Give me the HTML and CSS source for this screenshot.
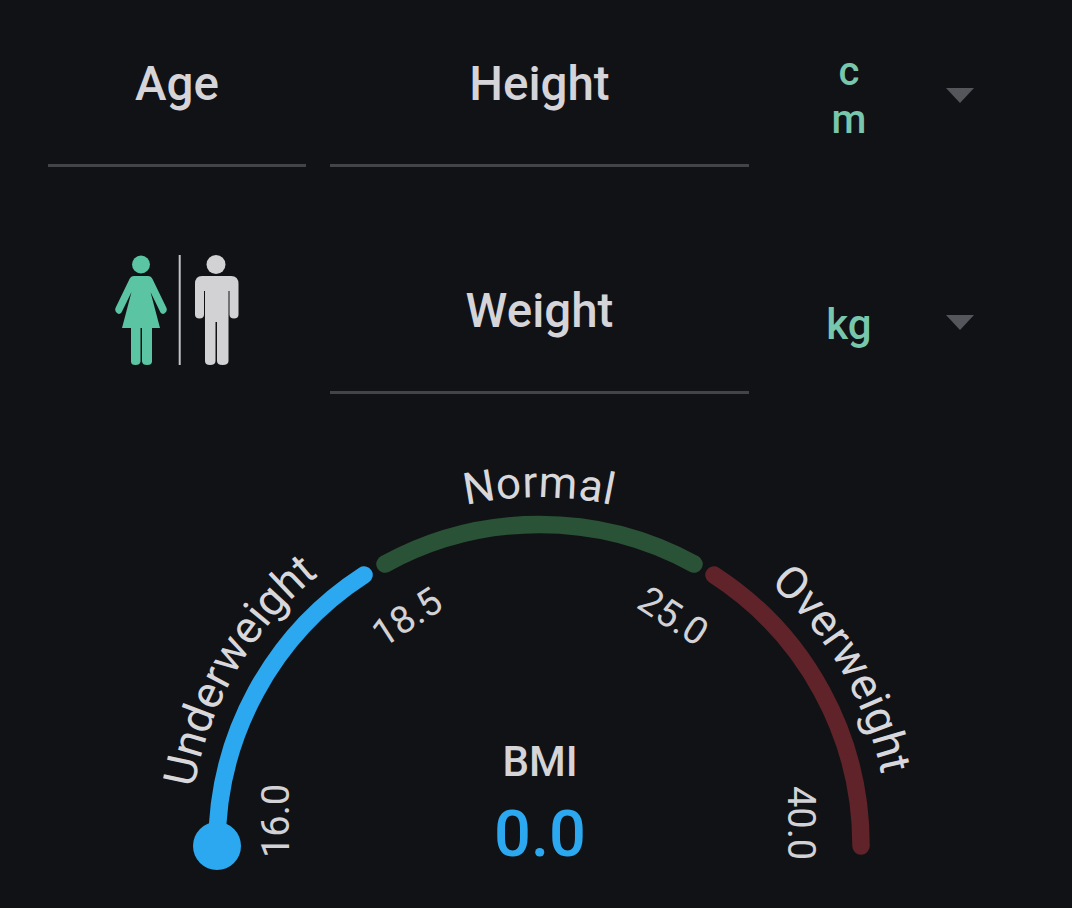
FILE: index.html
```html
<!DOCTYPE html>
<html lang="en">
<head>
<meta charset="utf-8">
<title>BMI calculator</title>
<link rel="stylesheet" href="styles.css">
</head>
<body>
<main class="screen">
  <section class="form">
    <div class="field"><span class="field-label">Age</span></div>
    <div class="field"><span class="field-label">Height</span></div>
    <div class="unit">
      <span class="unit-value unit-narrow">cm</span>
      <span class="caret"></span>
    </div>
    <div class="gender">
      <svg class="gender-icon" viewBox="115 254 125 112" aria-label="Gender">
        <g class="female">
          <circle cx="141" cy="264.5" r="9"/>
          <path d="M134 276H148Q151 276 152.5 279L166.5 308Q167.5 311 165 313Q162.5 315 160.5 312.5L150.5 292L160 328H152V361.5Q152 365 147 365Q142.5 365 142 361.5V328H140.5V361.5Q140 365 135.500 365Q131 365 131 361.5V328H122L131.500 292L121.500 312.5Q119.500 315 117 313Q114.500 311 115.500 308L129.500 279Q131 276 134 276Z"/>
        </g>
        <rect class="divider" x="178.700" y="255" width="2" height="110"/>
        <g class="male">
          <circle cx="216" cy="264.500" r="9.500"/>
          <path d="M202 276H231Q238.500 276 238.500 284V314.500Q238.500 318.500 234 318.500Q229.500 318.500 229.500 314.500V291H228.500V361Q228.500 365 222.500 365Q217 365 217 361V322H215.500V361Q215.500 365 210 365Q205 365 205 361V291H204V314.500Q204 318.500 199.500 318.500Q195 318.500 195 314.500V284Q195 276 202 276Z"/>
        </g>
      </svg>
    </div>
    <div class="field field-second"><span class="field-label">Weight</span></div>
    <div class="unit unit-second">
      <span class="unit-value unit-wide">kg</span>
      <span class="caret"></span>
    </div>
  </section>

  <svg class="gauge" viewBox="0 440 1072 468" aria-label="BMI gauge">
    <defs>
      <path id="arc-left" d="M 189 847 A 350 350 0 0 1 371 540"/>
      <path id="arc-top" d="M 339 560 A 350 350 0 0 1 739 560"/>
      <path id="arc-right" d="M 707 540 A 350 350 0 0 1 889 847"/>
    </defs>
    <path class="band band-blue" d="M 217 846 A 322 322 0 0 1 364 575"/>
    <path class="band band-green" d="M 385 564 A 322 322 0 0 1 694 564"/>
    <path class="band band-red" d="M 714 575 A 322 322 0 0 1 861 846"/>
    <circle class="pointer" cx="217" cy="846" r="24"/>

    <text class="zone"><textPath href="#arc-left" startOffset="49.5%" text-anchor="middle">Underweight</textPath></text>
    <text class="zone zone-normal"><textPath href="#arc-top" startOffset="50%" text-anchor="middle">Normal</textPath></text>
    <text class="zone"><textPath href="#arc-right" startOffset="50.5%" text-anchor="middle">Overweight</textPath></text>

    <text class="tick" transform="translate(289 821) rotate(-90)">16.0</text>
    <text class="tick" transform="translate(414 628) rotate(-33)">18.5</text>
    <text class="tick" transform="translate(666 627) rotate(33)">25.0</text>
    <text class="tick" transform="translate(788 823) rotate(90)">40.0</text>

    <text class="bmi-label" x="540" y="776">BMI</text>
    <text class="bmi-value" x="540" y="856">0.0</text>
  </svg>
</main>
</body>
</html>
```

FILE: styles.css
```css
* { box-sizing: border-box; }

html, body {
  margin: 0;
  height: 100%;
  background: #111215;
  overflow: hidden;
}

.screen {
  width: 1072px;
  height: 908px;
  display: flex;
  flex-direction: column;
  font-family: Roboto, "Liberation Sans", sans-serif;
}

.form {
  display: grid;
  grid-template-columns: 258px 419px 1fr;
  grid-template-rows: 167px 227px;
  column-gap: 24px;
  padding-left: 48px;
  height: 394px;
}

.field {
  display: flex;
  align-items: flex-end;
  justify-content: center;
  border-bottom: 3px solid #434447;
  padding-bottom: 54px;
}

.field-label {
  font-size: 47.5px;
  line-height: 52px;
  font-weight: 500;
  color: #d4d4d9;
}

.unit {
  display: flex;
  align-items: flex-start;
  padding-top: 48px;
  margin-left: -24px;
}

.unit-second {
  padding-top: 134px;
}

.unit-value {
  width: 80px;
  margin-left: 60px;
  text-align: center;
  font-size: 40px;
  line-height: 48px;
  font-weight: 500;
  color: #78c6ac;
}

.unit-wide {
  font-size: 42px;
}

.unit-narrow {
  word-break: break-all;
  padding: 0 20px;
}

.caret {
  width: 0;
  height: 0;
  margin-left: 57px;
  margin-top: 40px;
  border-left: 14px solid transparent;
  border-right: 14px solid transparent;
  border-top: 15px solid #55565c;
}

.unit-second .caret {
  margin-top: 14px;
}

.gender {
  display: flex;
  justify-content: center;
  align-items: flex-start;
  padding-top: 87px;
}

.gender-icon {
  width: 125px;
  height: 112px;
}

.female { fill: #5ac4a3; }
.male { fill: #d2d2d4; }
.divider { fill: #c4c4c8; }

.gauge {
  width: 1072px;
  height: 468px;
  margin-top: 46px;
  display: block;
  flex: none;
}

.band {
  fill: none;
  stroke-width: 17.500;
  stroke-linecap: round;
}

.band-blue { stroke: #2ba8f0; }
.band-green { stroke: #2a5236; }
.band-red { stroke: #5f2329; }
.pointer { fill: #2ba8f0; }

.zone {
  font-family: Roboto, "Liberation Sans", sans-serif;
  font-size: 45px;
  fill: #d8d8dc;
}

.zone-normal {
  font-size: 44px;
  letter-spacing: 0.5px;
}

.tick {
  font-family: Roboto, "Liberation Sans", sans-serif;
  font-size: 38px;
  fill: #d2d2d6;
  text-anchor: middle;
}

.bmi-label {
  font-family: Roboto, "Liberation Sans", sans-serif;
  font-size: 42px;
  font-weight: 500;
  fill: #d4d4d9;
  text-anchor: middle;
}

.bmi-value {
  font-family: Roboto, "Liberation Sans", sans-serif;
  font-size: 65px;
  font-weight: 500;
  fill: #2ba8f0;
  text-anchor: middle;
}
```
